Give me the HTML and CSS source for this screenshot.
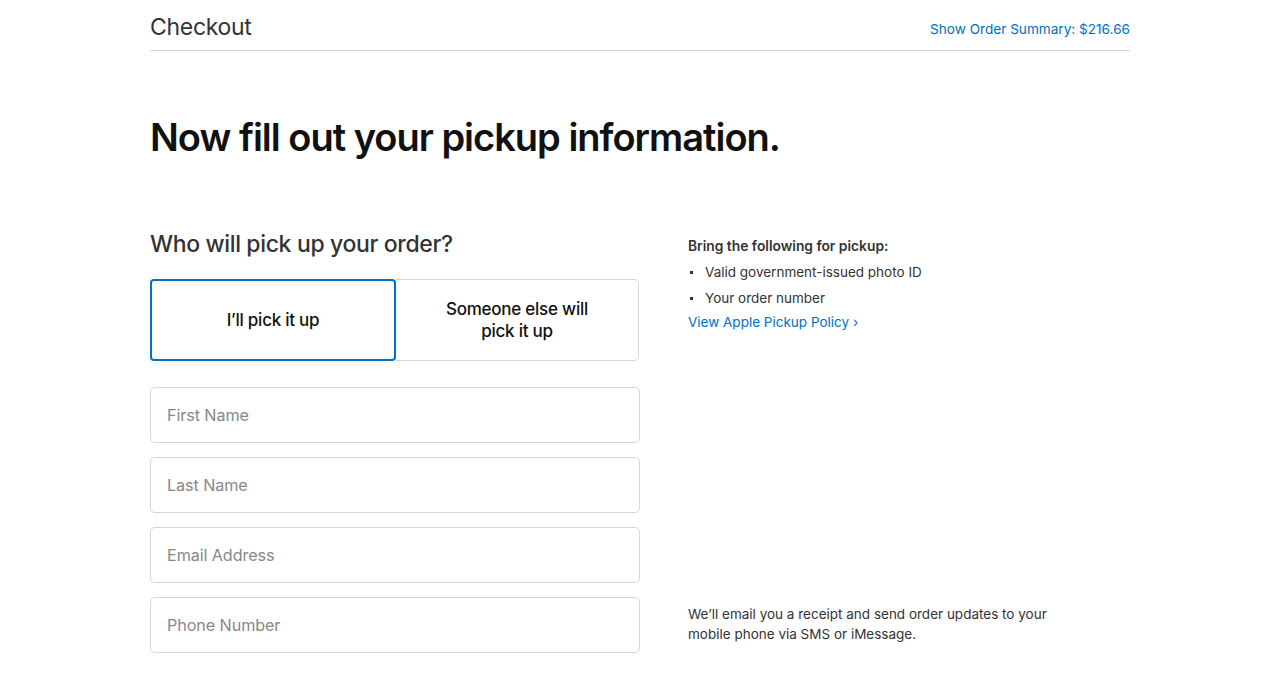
FILE: index.html
```html
<!DOCTYPE html>
<html lang="en">
<head>
<meta charset="utf-8">
<title>Checkout</title>
<link rel="stylesheet" href="styles.css">
</head>
<body>
<div class="page">
  <header class="topbar">
    <h1 class="brand">Checkout</h1>
    <a class="summary" href="#">Show Order Summary: $216.66</a>
  </header>
  <h2 class="headline">Now fill out your pickup information.</h2>
  <div class="columns">
    <section class="left">
      <h3 class="question">Who will pick up your order?</h3>
      <div class="options">
        <button class="option selected">I’ll pick it up</button>
        <button class="option">Someone else will<br>pick it up</button>
      </div>
      <div class="fields">
        <div class="field">First Name</div>
        <div class="field">Last Name</div>
        <div class="field">Email Address</div>
        <div class="field">Phone Number</div>
      </div>
    </section>
    <aside class="right">
      <div class="bring">
        <p class="bring-title">Bring the following for pickup:</p>
        <ul class="bring-list">
          <li>Valid government-issued photo ID</li>
          <li>Your order number</li>
        </ul>
        <a class="policy" href="#">View Apple Pickup Policy ›</a>
      </div>
      <p class="notice">We’ll email you a receipt and send order updates to your mobile phone via SMS or iMessage.</p>
    </aside>
  </div>
</div>
</body>
</html>
```
FILE: styles.css
```css
* { box-sizing: border-box; }
html, body { margin: 0; padding: 0; background: #fff; }
body {
  font-family: Inter, "Noto Sans", "Liberation Sans", sans-serif;
  color: #333;
}
.page {
  width: 980px;
  margin: 0 auto;
}
.topbar {
  display: flex;
  justify-content: space-between;
  align-items: flex-end;
  height: 51px;
  border-bottom: 1px solid #d6d6d6;
  padding-bottom: 11px;
}
.brand {
  margin: 0 0 -2px;
  font-size: 23px;
  font-weight: 400;
  color: #333;
  letter-spacing: -0.3px;
  line-height: 28px;
}
.summary {
  color: #0070c9;
  text-decoration: none;
  font-size: 13.6px;
  line-height: 18px;
  margin-bottom: 1px;
}
.headline {
  margin: 62px 0 0;
  font-size: 38px;
  line-height: 48px;
  font-weight: 600;
  color: #111;
  letter-spacing: -1px;
}
.columns {
  display: flex;
  margin-top: 68px;
}
.left {
  width: 490px;
}
.question {
  margin: 0;
  font-size: 23px;
  line-height: 30px;
  font-weight: 500;
  color: #333;
  letter-spacing: -0.35px;
}
.options {
  display: flex;
  margin-top: 20px;
  width: 489px;
}
.option {
  flex: 1;
  height: 82px;
  background: #fff;
  border: 1px solid #d6d6d6;
  font-family: inherit;
  font-size: 17px;
  font-weight: 500;
  line-height: 22px;
  color: #111;
  letter-spacing: -0.25px;
  padding: 0;
}
.option:first-child {
  border-radius: 5px 0 0 5px;
  border-right: none;
}
.option:last-child {
  border-radius: 0 5px 5px 0;
  border-left: none;
}
.option.selected {
  border: 2px solid #0070c9;
  border-radius: 4px;
  flex: 0 0 246px;
  padding-bottom: 1px;
}
.fields {
  display: flex;
  flex-direction: column;
  gap: 14px;
  margin-top: 26px;
}
.field {
  height: 56px;
  border: 1px solid #d6d6d6;
  border-radius: 5px;
  padding: 0 16px;
  display: flex;
  align-items: center;
  font-size: 16.2px;
  color: #888;
  letter-spacing: -0.1px;
}
.right {
  margin-left: 48px;
  width: 380px;
  display: flex;
  flex-direction: column;
  justify-content: space-between;
  padding-top: 4px;
}
.bring-title {
  margin: 0;
  font-size: 13.8px;
  line-height: 26px;
  font-weight: 600;
  color: #333;
}
.bring-list {
  margin: 0;
  padding: 0 0 0 17px;
  list-style: none;
  font-size: 13.5px;
  line-height: 26px;
  color: #333;
}
.bring-list li { position: relative; }
.bring-list li::before {
  content: "";
  position: absolute;
  left: -15px;
  top: 12px;
  width: 3px;
  height: 3px;
  background: #333;
}
.policy {
  display: block;
  color: #0070c9;
  text-decoration: none;
  font-size: 13.5px;
  line-height: 22px;
}
.notice {
  margin: 0 0 9px;
  font-size: 13.5px;
  line-height: 20px;
  color: #333;
  width: 370px;
}
```
